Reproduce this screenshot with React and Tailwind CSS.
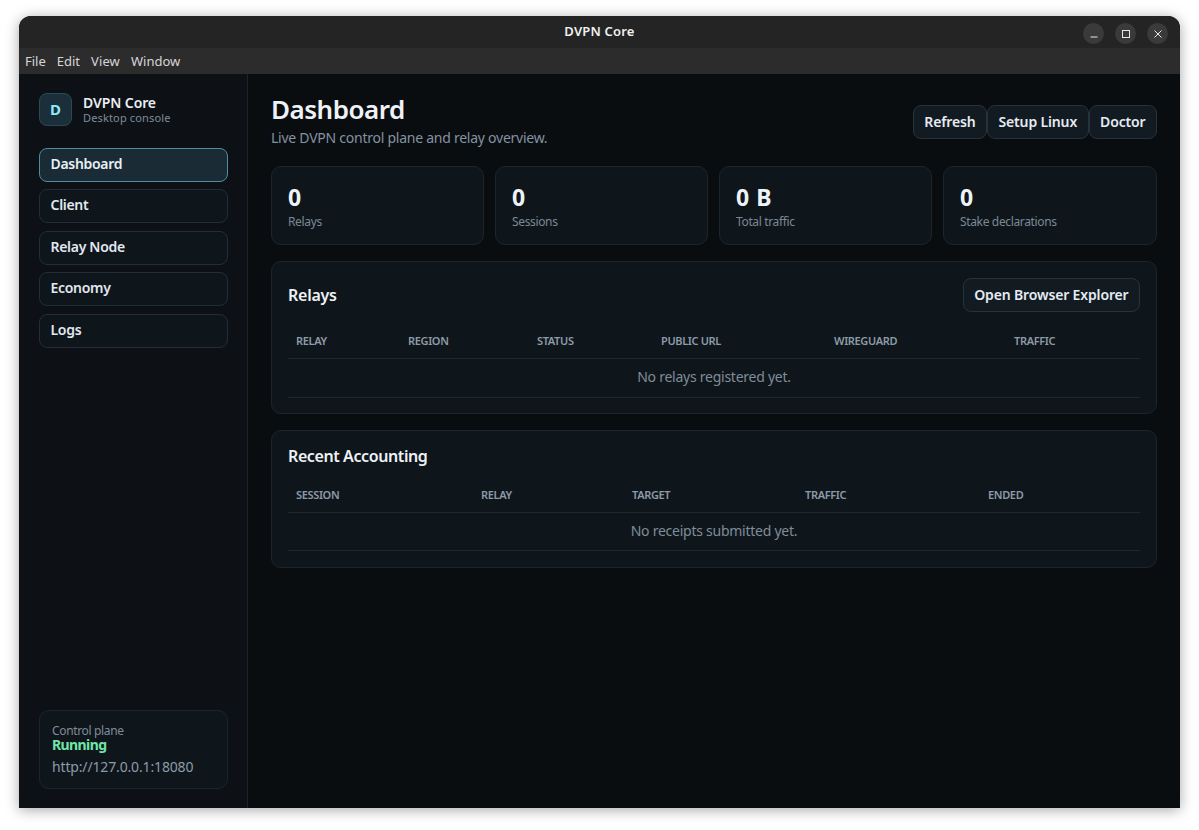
import React from "react";

function Stat({ value, label, wide }) {
  return (
    <div className={`${wide ? "flex-1" : "w-[213px]"} h-[79px] rounded-[10px] border border-[#1c252e] bg-[#0f161b] pl-[16px] pt-[15px]`}>
      <div className="text-[23px] leading-[30px] font-bold tracking-[0.5px] text-[#eef3f8]">{value}</div>
      <div className="text-[12px] leading-[16px] mt-[2px] tracking-[-0.35px] text-[#7b8894]">{label}</div>
    </div>
  );
}

function Table({ cols, heads, empty, rowClass }) {
  return (
    <div>
      <div className={`grid ${cols} h-[35px] items-center border-b border-[#1f2831]`}>
        {heads.map((h) => (
          <div key={h} className="pl-2 text-[11px] font-semibold tracking-[-0.35px] text-[#8d9aa8]">{h}</div>
        ))}
      </div>
      <div className={`${rowClass} pb-[3px] flex items-center justify-center border-b border-[#1f2831] text-[14px] tracking-[-0.25px] text-[#7f8c99]`}>{empty}</div>
    </div>
  );
}

function NavItem({ label, active }) {
  return (
    <div
      className={
        active
          ? "h-[34px] rounded-[8px] border border-[#4d8e9c] bg-[#1a2b36] pl-[10.5px] pb-[3px] flex items-center text-[14px] font-semibold tracking-[-0.3px] text-[#e8f0f5]"
          : "h-[34px] rounded-[8px] border border-[#232d37] bg-[#0f161b] pl-[10.5px] pb-[3px] flex items-center text-[14px] font-semibold tracking-[-0.3px] text-[#e2e8f0]"
      }
    >
      {label}
    </div>
  );
}

function Btn({ children }) {
  return (
    <div className="h-[34px] rounded-[8px] border border-[#28323c] bg-[#131b22] px-[10.5px] pb-[2px] flex items-center text-[14px] font-semibold tracking-[-0.15px] text-[#e6ecf3]">
      {children}
    </div>
  );
}

function WinBtn({ children }) {
  return <div className="w-[21px] h-[21px] rounded-full bg-[#3a3a3a] flex items-center justify-center">{children}</div>;
}

export default function App() {
  return (
    <div className="w-[1199px] h-[830px] bg-white pt-4 pl-[19px] overflow-hidden font-['Noto_Sans',sans-serif]">
      <div className="w-[1161px] h-[792px] rounded-t-[12px] overflow-hidden flex flex-col bg-[#0a0d10] shadow-[0_2px_14px_rgba(0,0,0,0.35)]">
        <div className="h-[32px] shrink-0 bg-[#242424] relative flex items-center justify-center">
          <span className="text-[13px] font-semibold tracking-[0.2px] text-[#f0f0f0]">DVPN Core</span>
          <div className="absolute right-[12px] top-[7px] flex gap-[11px]">
            <WinBtn>
              <svg width="10" height="10" viewBox="0 0 10 10"><path d="M1.5 8h7" stroke="#e8e8e8" strokeWidth="1" /></svg>
            </WinBtn>
            <WinBtn>
              <svg width="10" height="10" viewBox="0 0 10 10"><rect x="1.5" y="1.5" width="7" height="7" fill="none" stroke="#e8e8e8" strokeWidth="1" /></svg>
            </WinBtn>
            <WinBtn>
              <svg width="10" height="10" viewBox="0 0 10 10"><path d="M1.5 1.5l7 7M8.5 1.5l-7 7" stroke="#e8e8e8" strokeWidth="1" /></svg>
            </WinBtn>
          </div>
        </div>
        <div className="h-[26px] shrink-0 bg-[#2c2c2c] flex items-center pl-[6px] pt-[1px] gap-[11px] text-[13px] text-[#d6d6d6]">
          <span>File</span>
          <span>Edit</span>
          <span className="tracking-[0.1px]">View</span>
          <span>Window</span>
        </div>
        <div className="flex-1 flex min-h-0">
          <aside className="w-[229px] shrink-0 bg-[#0d1116] border-r border-[#1c242c] pl-5 pr-[19px] pt-[19px] pb-[19px] flex flex-col">
            <div className="flex items-center gap-[11px] h-[33px]">
              <div className="w-[33px] h-[33px] rounded-[8px] border border-[#2c4a55] bg-[#1a2f39] flex items-center justify-center text-[15px] font-bold text-[#8ceaf8]">D</div>
              <div>
                <div className="text-[14px] leading-[17px] font-semibold tracking-[-0.1px] text-[#e8eef3]">DVPN Core</div>
                <div className="text-[11px] leading-[14px] tracking-[0.15px] text-[#7f8c99]">Desktop console</div>
              </div>
            </div>
            <nav className="mt-[22px] flex flex-col gap-[7.4px]">
              <NavItem label="Dashboard" active />
              <NavItem label="Client" />
              <NavItem label="Relay Node" />
              <NavItem label="Economy" />
              <NavItem label="Logs" />
            </nav>
            <div className="mt-auto h-[79px] rounded-[10px] border border-[#1c252e] bg-[#0f161b] pl-[12px] pt-[13px]">
              <div className="text-[12px] leading-[14px] tracking-[-0.35px] text-[#7f8c99]">Control plane</div>
              <div className="text-[14px] leading-[14px] font-bold tracking-[-0.6px] text-[#6ee7a8]">Running</div>
              <div className="text-[14px] leading-[18px] mt-[6px] tracking-[-0.15px] text-[#8d9aa8]">http://127.0.0.1:18080</div>
            </div>
          </aside>
          <main className="flex-1 min-w-0 pl-[23px] pr-[23px] pt-[18px]">
            <div className="flex justify-between items-start h-[74px]">
              <div>
                <h1 className="text-[26px] leading-[35px] font-semibold tracking-[-0.5px] text-[#eef2f6]">Dashboard</h1>
                <p className="mt-[1px] text-[14px] leading-[20px] tracking-[-0.25px] text-[#8492a0]">Live DVPN control plane and relay overview.</p>
              </div>
              <div className="flex mt-[13px]">
                <Btn>Refresh</Btn>
                <Btn>Setup Linux</Btn>
                <Btn>Doctor</Btn>
              </div>
            </div>
            <div className="flex gap-[11px]">
              <Stat value="0" label="Relays" />
              <Stat value="0" label="Sessions" />
              <Stat value="0 B" label="Total traffic" />
              <Stat value="0" label="Stake declarations" wide />
            </div>
            <section className="mt-4 h-[153px] rounded-[10px] border border-[#1c252e] bg-[#0f161b] px-4 pt-4">
              <div className="flex items-center justify-between h-[34px]">
                <h2 className="text-[16px] font-semibold tracking-[-0.25px] text-[#eef2f6]">Relays</h2>
                <Btn>Open Browser Explorer</Btn>
              </div>
              <div className="mt-[12px]">
                <Table
                  cols="grid-cols-[112px_129px_124px_173px_180px_134px]"
                  heads={["RELAY", "REGION", "STATUS", "PUBLIC URL", "WIREGUARD", "TRAFFIC"]}
                  empty="No relays registered yet."
                  rowClass="h-[39px]"
                />
              </div>
            </section>
            <section className="mt-4 h-[138px] rounded-[10px] border border-[#1c252e] bg-[#0f161b] px-4 pt-[13px]">
              <h2 className="text-[16px] leading-[24px] font-semibold tracking-[-0.4px] text-[#eef2f6]">Recent Accounting</h2>
              <div className="mt-[10px]">
                <Table
                  cols="grid-cols-[185px_151px_173px_183px_160px]"
                  heads={["SESSION", "RELAY", "TARGET", "TRAFFIC", "ENDED"]}
                  empty="No receipts submitted yet."
                  rowClass="h-[38px]"
                />
              </div>
            </section>
          </main>
        </div>
      </div>
    </div>
  );
}
